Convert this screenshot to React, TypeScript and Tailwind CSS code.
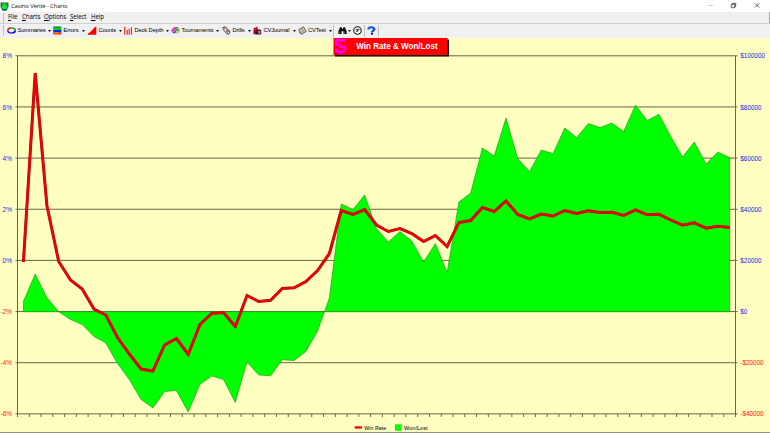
import React from "react";

const winRate = [
  261.5, 72.5, 205, 261, 279.5, 288.5, 308.5, 314.5, 337, 353.5, 368.5, 370.5, 344.5, 338, 354, 324,
  313, 312, 326, 295, 301, 299.8, 288, 287.3, 281, 270, 253, 210, 214, 209, 224.5, 231,
  228, 233, 241, 235, 246, 222, 220, 207, 211, 200.5, 214, 218.5, 213.5, 215.5, 210, 213,
  210.3, 212, 211.7, 215, 209.3, 214.3, 213.8, 219.5, 224.7, 222.3, 227.7, 225.7, 227,
];

const wonLost = [
  301, 273.5, 297, 311.3, 319, 324, 336, 342.5, 363, 379, 399, 407.5, 391, 390, 411.5, 384,
  375.5, 379, 402, 361.5, 374.5, 375.3, 359.3, 360, 351, 330.5, 297.5, 203.5, 209, 194.5, 228, 241.5,
  231, 240.5, 261.5, 243, 272, 201.5, 192.5, 147.5, 155.5, 117.5, 158, 171, 149.5, 153, 127.5, 137,
  123, 127, 122.5, 131, 104.5, 120, 113.8, 136, 156.5, 141.5, 163.5, 151.5, 157,
];

const axis = [
  { left: "8%", right: "$100000" },
  { left: "6%", right: "$80000" },
  { left: "4%", right: "$60000" },
  { left: "2%", right: "$40000" },
  { left: "0%", right: "$20000" },
  { left: "-2%", right: "$0" },
  { left: "-4%", right: "-$20000" },
  { left: "-6%", right: "-$40000" },
];

const LEFT = 17.5;
const RIGHT = 735.5;
const STEP = (RIGHT - LEFT) / 61;
const ZERO = 311.2;

const px = (i: number) => LEFT + STEP * (i + 0.5);
const toPoints = (values: number[]) => values.map((y, i) => `${px(i).toFixed(1)},${y}`).join(" ");
const gridY = (i: number) => 55.3 + i * 51.15;

const Icon = ({ children }: { children: React.ReactNode }) => (
  <svg className="h-[9px] w-[9px] shrink-0" viewBox="0 0 9 9">
    {children}
  </svg>
);

const SummariesIcon = () => (
  <Icon>
    <g fill="none" strokeWidth="1.6">
      <path d="M0.8 4.5C0.8 2.8 2.6 2 4.5 2" stroke="#e02020" />
      <path d="M4.5 2C6.6 2 8.2 3 8.2 4.5" stroke="#00b020" />
      <path d="M8.2 4.5C8.2 6 6.6 7 4.5 7" stroke="#1010c0" />
      <path d="M4.5 7C2.4 7 0.8 6 0.8 4.5" stroke="#2020ff" />
    </g>
  </Icon>
);

const ErrorsIcon = () => (
  <Icon>
    <rect x="0.3" y="0.8" width="8" height="3.6" fill="#00d020" />
    <rect x="0.3" y="4" width="8" height="2.5" fill="#1020ff" />
    <rect x="0.3" y="6.3" width="8" height="2.2" fill="#ff2010" />
    <path d="M0.3 1h8" stroke="#104060" strokeWidth="0.7" fill="none" />
    <path d="M1.5 7h4" stroke="#ffd000" strokeWidth="0.9" />
  </Icon>
);

const CountsIcon = () => (
  <Icon>
    <path d="M0 8.7V7.5L2 6.3L4 4.2L6 2L8.3 0.3V8.7Z" fill="#f00" />
  </Icon>
);

const DeckIcon = () => (
  <Icon>
    <path d="M0.8 0.8v8M3.2 4v4.8M5.2 2.8v6M7.4 1.2v7.6" stroke="#f01818" strokeWidth="1.1" />
  </Icon>
);

const TournamentsIcon = () => (
  <Icon>
    <ellipse cx="4.5" cy="4.4" rx="4.2" ry="3.1" fill="#b8a8b0" />
    <path d="M0.8 5.5L3 3l1.6 1" stroke="#f020d0" strokeWidth="1.6" fill="none" />
    <path d="M3 2L7 1.8" stroke="#c02020" strokeWidth="1.1" />
    <path d="M5 4.2L8.4 3.6" stroke="#10c030" strokeWidth="1.4" />
    <path d="M2 6.7L5 5.7" stroke="#2050e0" strokeWidth="1.3" />
    <path d="M5.2 6.3L7 5.6" stroke="#ffe040" strokeWidth="1" />
  </Icon>
);

const DrillsIcon = () => (
  <Icon>
    <path d="M0.8 1.5L3.5 0.8L8 6L6.8 8.4L4.5 7.5L1.5 3.8Z" fill="#ddd" stroke="#333" strokeWidth="0.8" />
    <path d="M1.6 1.5L3.5 3" stroke="#c02020" strokeWidth="1" />
    <path d="M4 5h4M5.2 3.5v4.5" stroke="#333" strokeWidth="0.6" />
  </Icon>
);

const JournalIcon = () => (
  <Icon>
    <path d="M0.5 2.5L4.5 0.6V7L0.5 8.5Z" fill="#b00020" />
    <path d="M4.3 3L8.2 4V8.6H2Z" fill="#301820" />
    <path d="M5.3 4.6L7.3 5V7.5H5.3Z" fill="#e09090" />
    <path d="M1.3 4L3.5 3" stroke="#ff5050" strokeWidth="0.7" />
  </Icon>
);

const TestIcon = () => (
  <Icon>
    <path d="M0.8 3.5L5.5 0.8L8.2 5.5L3.5 8.2Z" fill="#ddd8b0" stroke="#444" strokeWidth="0.8" />
    <path d="M2.8 4L5.2 2.8M3.5 5.3L6 4.2M4.2 6.5L6.5 5.4" stroke="#665" strokeWidth="0.6" />
    <path d="M1 5.5L3 8.3" stroke="#555" strokeWidth="0.8" />
  </Icon>
);

const BinocularsIcon = () => (
  <Icon>
    <path d="M2 1.3h1.7L4.2 3h.6l.5-1.7H7L8.7 5.5V8H5.5V5.2h-2V8H0.3V5.5Z" fill="#111" />
    <path d="M1.3 6.3v1M6.4 6.3v1" stroke="#ccc" strokeWidth="0.6" />
  </Icon>
);

const ClockIcon = () => (
  <Icon>
    <circle cx="4.5" cy="4.5" r="3.7" fill="#fff" stroke="#181818" strokeWidth="1.1" />
    <path d="M2.6 3.4h3.8M4.6 4.7L6.3 3M3 5.8L4.6 4.6" stroke="#222" strokeWidth="0.8" fill="none" />
    <circle cx="4.5" cy="4.6" r="0.9" fill="#222" />
  </Icon>
);

const HelpIcon = () => (
  <Icon>
    <path d="M1.4 3.4C1.4 0.6 7.4 0.6 7.4 3.3C7.4 5 5 4.9 4.9 6.5" stroke="#1048e0" strokeWidth="2.1" fill="none" />
    <path d="M1.2 3.8C1.4 2.4 3 1.8 4.4 2" stroke="#20c0f0" strokeWidth="0.8" fill="none" />
    <rect x="3.9" y="7" width="2.1" height="1.7" fill="#101880" />
  </Icon>
);

const Caret = () => (
  <svg className="h-[2px] w-[3px] shrink-0" viewBox="0 0 3 2">
    <path d="M0 0h3L1.5 2Z" fill="#111" />
  </svg>
);

// box runs from one icon to the next, label from the icon to the caret
const tools = [
  { name: "Summaries", icon: <SummariesIcon />, box: "w-[46px]", label: "w-[30.5px]" },
  { name: "Errors", icon: <ErrorsIcon />, box: "w-[35px]", label: "w-[19px]" },
  { name: "Counts", icon: <CountsIcon />, box: "w-[36px]", label: "w-[21px]" },
  { name: "Deck Depth", icon: <DeckIcon />, box: "w-[47px]", label: "w-[31.5px]" },
  { name: "Tournaments", icon: <TournamentsIcon />, box: "w-[51px]", label: "w-[35px]" },
  { name: "Drills", icon: <DrillsIcon />, box: "w-[31px]", label: "w-[15.5px]" },
  { name: "CVJournal", icon: <JournalIcon />, box: "w-[44.5px]", label: "w-[29.5px]" },
  { name: "CVTest", icon: <TestIcon />, box: "w-[35.5px]", label: "w-[21px]" },
];

const TitleBar = () => (
  <div className="flex h-[12px] items-center bg-white">
    <svg className="h-[9px] w-[9px]" viewBox="0 0 9 9">
      <path d="M0.5 0.5H8.5V5L6.5 8.5H2.5L0.5 5Z" fill="#168038" />
      <path d="M1 1L3 2.5M8 1L6 2.5" stroke="#e02020" strokeWidth="1" />
      <circle cx="4.5" cy="4.3" r="2.7" fill="#10f040" />
      <path d="M2.5 3.2h1M5.5 3.2h1M2.5 8h4" stroke="#103040" strokeWidth="0.9" />
    </svg>
    <span className="ml-[2px] flex-1 font-['Open_Sans',sans-serif] text-[6px] leading-none tracking-[-0.17px] text-[#111]">
      Casino Vérité - Charts
    </span>
    <svg className="h-[12px] w-[70px]" viewBox="0 0 70 12" fill="none" strokeWidth="0.7">
      <path d="M8 5.5h5" stroke="#bbb" />
      <path d="M31.3 4.3h3.4v3.4h-3.4zM32.4 4.3V3.3h3.3v3.3h-1" stroke="#222" />
      <path d="M55 3.3l4.3 4.3M59.3 3.3L55 7.6" stroke="#222" />
    </svg>
  </div>
);

const MenuBar = () => (
  <div className="flex h-[12px] items-center border-b border-[#d0d0d0] bg-[#f0f0f0] pl-[3px] font-['Open_Sans',sans-serif] text-[6.2px] leading-none tracking-[-0.1px] text-black">
    <div className="h-[10px] w-px bg-[#c0c0c0]" />
    <span className="ml-[4px] w-[14px]"><u>F</u>ile</span>
    <span className="w-[22px]"><u>C</u>harts</span>
    <span className="w-[26px]"><u>O</u>ptions</span>
    <span className="w-[21px]"><u>S</u>elect</span>
    <span className="flex-1"><u>H</u>elp</span>
    <div className="h-full w-px bg-[#a8a8a8]" />
  </div>
);

const ToolBar = () => (
  <div className="flex h-[13.5px] items-center bg-[#f0f0f0] pl-[3px] text-[5.8px] leading-none tracking-[-0.12px] text-black">
    <div className="mr-[3px] h-[11px] w-px bg-[#c0c0c0]" />
    {tools.map((tool) => (
      <div key={tool.name} className={`flex shrink-0 items-center ${tool.box}`}>
        {tool.icon}
        <span className={`ml-[1.4px] shrink-0 whitespace-nowrap ${tool.label}`}>{tool.name}</span>
        <Caret />
      </div>
    ))}
    <div className="mr-[3.5px] h-[12px] w-px bg-[#c0c0c0]" />
    <BinocularsIcon />
    <div className="flex w-[6.5px] justify-center"><Caret /></div>
    <ClockIcon />
    <div className="mx-[2px] h-[12px] w-px bg-[#c0c0c0]" />
    <HelpIcon />
    <div className="ml-[1.5px] h-[12px] w-px bg-[#c0c0c0]" />
  </div>
);

const Chart = () => (
  <svg className="block h-[395.5px] w-[770px]" viewBox="0 37.5 770 395.5">
    <g stroke="#68664a" strokeWidth="1">
      {axis.map((row, i) => (
        <line key={row.left} x1="15.5" x2="737.5" y1={gridY(i)} y2={gridY(i)} />
      ))}
      <line x1={LEFT} x2={LEFT} y1="55" y2="416.5" />
      <line x1={RIGHT} x2={RIGHT} y1="55" y2="416.5" />
      {Array.from({ length: 60 }, (_, i) => (
        <line key={i} x1={LEFT + STEP * (i + 1)} x2={LEFT + STEP * (i + 1)} y1="413.5" y2="416.5" />
      ))}
      <line x1="0" x2="770" y1="432.3" y2="432.3" />
    </g>

    <polygon
      points={`${px(0)},${ZERO} ${toPoints(wonLost)} ${px(60)},${ZERO}`}
      fill="#00ff00"
      stroke="#189018"
      strokeWidth="0.6"
    />
    <polyline points={toPoints(winRate)} fill="none" stroke="#981818" strokeWidth="3" />
    <polyline points={toPoints(winRate)} fill="none" stroke="#f00000" strokeWidth="2.2" />

    <g fontSize="7.3">
      {axis.map((row, i) => (
        <g key={row.left}>
          <text
            x={row.left.length > 2 ? 0.7 : 2.5}
            y={gridY(i) + 2.6}
            textLength={row.left.length > 2 ? 11.3 : 9.5}
            lengthAdjust="spacingAndGlyphs"
            fill={i > 4 ? "#ff2010" : "#2020f0"}
          >
            {row.left}
          </text>
          <text
            x="740.3"
            y={gridY(i) + 2.6}
            textLength={row.right.length * 3.55 - (row.right.startsWith("-") ? 1.6 : 0)}
            lengthAdjust="spacingAndGlyphs"
            fill={i > 5 ? "#ff2010" : "#2020f0"}
          >
            {row.right}
          </text>
        </g>
      ))}
    </g>

    <rect x="335" y="39" width="114" height="17" fill="#201000" />
    <rect x="333.5" y="37.5" width="114" height="17" fill="#ff0000" />
    <path
      d="M345.3 39.8H336M336.3 39V44.2H340.2M339 46.4H344.6V49.5Q344.2 51.8 340.3 51.8Q336.6 51.8 336.4 48.2"
      fill="none"
      stroke="#ff00ff"
      strokeWidth="2.8"
    />
    <text x="356.3" y="48.6" fontSize="8.4" fontWeight="bold" fill="#fff" textLength="81.3" lengthAdjust="spacingAndGlyphs">
      Win Rate &amp; Won/Lost
    </text>

    <rect x="354.7" y="425.8" width="7.3" height="2.3" fill="#ff0000" />
    <text x="364.3" y="429.2" fontSize="5.8" fill="#000" textLength="21.9" lengthAdjust="spacingAndGlyphs">Win Rate</text>
    <rect x="395" y="423.8" width="6.5" height="6.5" fill="#00ff00" />
    <text x="404" y="429.2" fontSize="5.8" fill="#000" textLength="23.5" lengthAdjust="spacingAndGlyphs">Won/Lost</text>
  </svg>
);

const App = () => {
  return (
    <div className="flex h-[433px] w-[770px] flex-col overflow-hidden bg-[#ffffc0] font-['Liberation_Sans',Arial,sans-serif]">
      <TitleBar />
      <MenuBar />
      <ToolBar />
      <Chart />
    </div>
  );
};

export default App;
